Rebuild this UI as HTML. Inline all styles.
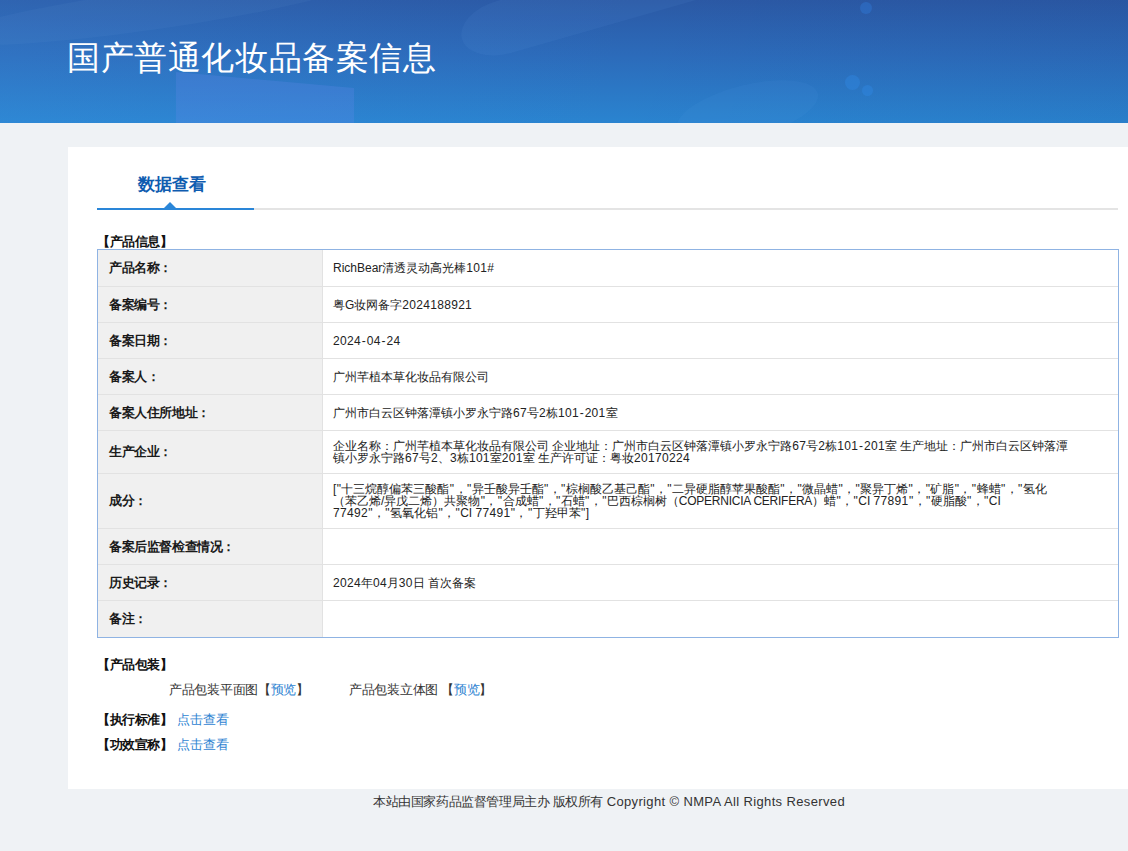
<!DOCTYPE html>
<html><head><meta charset="utf-8">
<style>
*{margin:0;padding:0;box-sizing:border-box}
html,body{width:1128px;height:851px;overflow:hidden;background:#eff2f5;font-family:"Liberation Sans",sans-serif;color:#333}
#banner{position:absolute;left:0;top:0;width:1128px;height:123px;background:linear-gradient(105deg,rgba(70,160,240,0.16) 0%,rgba(70,150,240,0.05) 35%,rgba(70,150,240,0) 55%,rgba(10,30,90,0.05) 100%),linear-gradient(180deg,#2b59a5 0%,#2c6bba 45%,#2a84d0 100%);overflow:hidden}
#banner .sh{position:absolute}
#banner h1{position:absolute;left:67px;top:38px;font-size:33px;letter-spacing:0.6px;font-weight:normal;color:#fff;line-height:40px;white-space:nowrap}
#box{position:absolute;left:68px;top:147px;width:1060px;height:642px;background:#fff}
#tab{position:absolute;left:138px;top:171.5px;font-size:17px;font-weight:bold;color:#0f5cb0;line-height:26px;white-space:nowrap}
#gline{position:absolute;left:97px;top:208px;width:1021px;height:2px;background:#e4e4e4}
#bline{position:absolute;left:97px;top:208px;width:157px;height:2px;background:#2a86d8}
#tri{position:absolute;left:164px;top:202px;width:0;height:0;border-left:6px solid transparent;border-right:6px solid transparent;border-bottom:6px solid #2a86d8}
.sec{position:absolute;font-size:13px;font-weight:bold;color:#111;white-space:nowrap;line-height:16px;letter-spacing:-0.4px}
.sec a{font-weight:normal;letter-spacing:0}
table{position:absolute;left:98px;top:250px;width:1020px;border-collapse:separate;border-spacing:0}
#tb{position:absolute;left:97px;top:249px;width:1022px;height:389px;border:1px solid #8fb3e3}
td{font-size:12px;color:#222;vertical-align:middle;line-height:12px}
tr+tr td{border-top:1px solid #e2e2e2}
td.l{width:225px;background:#f0f0f0;font-weight:bold;font-size:13px;padding-left:11px;color:#1a1a1a;border-right:1px solid #e2e2e2;letter-spacing:-0.4px}
td.v{padding-left:10px;white-space:nowrap}
b.h{font-weight:normal;padding:0 0.9px}
i{font-style:normal;letter-spacing:0.3px}
em{font-style:normal;padding:0 0.42px}
u{text-decoration:none;letter-spacing:-0.25px}
a{color:#2f84d2;text-decoration:none}
.sec a{padding-left:1px}
.txt{position:absolute;font-size:13px;color:#333;white-space:nowrap;line-height:16px;letter-spacing:-0.3px}
#foot{position:absolute;left:373px;top:794px;font-size:13px;color:#333;line-height:16px;white-space:nowrap}
#foot .c{letter-spacing:-0.4px}
#foot .e{letter-spacing:0.36px}
</style></head><body>
<div id="banner">
<div class="sh" style="left:-60px;top:-10px;width:420px;height:40px;border-radius:50%;background:rgba(130,180,240,0.06);transform:rotate(-8deg)"></div>
<div class="sh" style="left:176px;top:60px;width:178px;height:70px;background:rgba(105,140,240,0.24);clip-path:polygon(0 12px,100% 28px,100% 100%,0 100%)"></div>
<div class="sh" style="left:462px;top:12px;width:420px;height:54px;border-radius:44px/27px;background:rgba(120,170,240,0.075);transform:rotate(-16deg);transform-origin:0 50%"></div>
<div class="sh" style="left:675px;top:85px;width:145px;height:52px;border-radius:50%;background:rgba(100,170,240,0.07);transform:rotate(-14deg)"></div>
<div class="sh" style="left:860px;top:2px;width:12px;height:12px;border-radius:50%;background:rgba(50,130,230,0.35);filter:blur(0.6px)"></div>
<div class="sh" style="left:845px;top:75px;width:15px;height:15px;border-radius:50%;background:rgba(50,140,235,0.35);filter:blur(0.6px)"></div>
<div class="sh" style="left:862px;top:85px;width:11px;height:11px;border-radius:50%;background:rgba(50,140,235,0.35);filter:blur(0.6px)"></div>
<h1>国产普通化妆品备案信息</h1></div>
<div id="box"></div>
<div id="tab">数据查看</div>
<div id="gline"></div><div id="bline"></div><div id="tri"></div>
<div class="sec" style="left:97px;top:234px">【产品信息】</div>
<table>
<tr style="height:36px"><td class="l">产品名称：</td><td class="v">RichBear清透灵动高光棒<i>101</i>#</td></tr>
<tr style="height:36px"><td class="l">备案编号：</td><td class="v">粤G妆网备字<i>2024188921</i></td></tr>
<tr style="height:36px"><td class="l">备案日期：</td><td class="v"><i>2024</i><b class="h">-</b><i>04</i><b class="h">-</b><i>24</i></td></tr>
<tr style="height:36px"><td class="l">备案人：</td><td class="v">广州芊植本草化妆品有限公司</td></tr>
<tr style="height:36px"><td class="l">备案人住所地址：</td><td class="v">广州市白云区钟落潭镇小罗永宁路<i>67</i>号<i>2</i>栋<i>101</i><b class="h">-</b><i>201</i>室</td></tr>
<tr style="height:43px"><td class="l">生产企业：</td><td class="v">企业名称：广州芊植本草化妆品有限公司 企业地址：广州市白云区钟落潭镇小罗永宁路<i>67</i>号<i>2</i>栋<i>101</i><b class="h">-</b><i>201</i>室 生产地址：广州市白云区钟落潭<br>镇小罗永宁路<i>67</i>号<i>2</i>、<i>3</i>栋<i>101</i>室<i>201</i>室 生产许可证：粤妆<i>20170224</i></td></tr>
<tr style="height:55px"><td class="l">成分：</td><td class="v">[<em>"</em>十三烷醇偏苯三酸酯<em>"</em>，<em>"</em>异壬酸异壬酯<em>"</em>，<em>"</em>棕榈酸乙基己酯<em>"</em>，<em>"</em>二异硬脂醇苹果酸酯<em>"</em>，<em>"</em>微晶蜡<em>"</em>，<em>"</em>聚异丁烯<em>"</em>，<em>"</em>矿脂<em>"</em>，<em>"</em>蜂蜡<em>"</em>，<em>"</em>氢化<br>（苯乙烯/异戊二烯）共聚物<em>"</em>，<em>"</em>合成蜡<em>"</em>，<em>"</em>石蜡<em>"</em>，<em>"</em>巴西棕榈树（<u>COPERNICIA CERIFERA</u>）蜡<em>"</em>，<em>"</em>CI <i>77891</i><em>"</em>，<em>"</em>硬脂酸<em>"</em>，<em>"</em>CI<br><i>77492</i><em>"</em>，<em>"</em>氢氧化铝<em>"</em>，<em>"</em>CI <i>77491</i><em>"</em>，<em>"</em>丁羟甲苯<em>"</em>]</td></tr>
<tr style="height:36px"><td class="l">备案后监督检查情况：</td><td class="v"></td></tr>
<tr style="height:36px"><td class="l">历史记录：</td><td class="v"><i>2024</i>年<i>04</i>月<i>30</i>日 首次备案</td></tr>
<tr style="height:37px"><td class="l">备注：</td><td class="v"></td></tr>
</table>
<div id="tb"></div>
<div class="sec" style="left:97px;top:657px">【产品包装】</div>
<div class="txt" style="left:169px;top:682px">产品包装平面图【<a>预览</a>】</div>
<div class="txt" style="left:349px;top:682px">产品包装立体图 【<a>预览</a>】</div>
<div class="sec" style="left:97px;top:712px">【执行标准】 <a>点击查看</a></div>
<div class="sec" style="left:97px;top:737px">【功效宣称】 <a>点击查看</a></div>
<div id="foot"><span class="c">本站由国家药品监督管理局主办 版权所有</span> <span class="e">Copyright © NMPA All Rights Reserved</span></div>
</body></html>
